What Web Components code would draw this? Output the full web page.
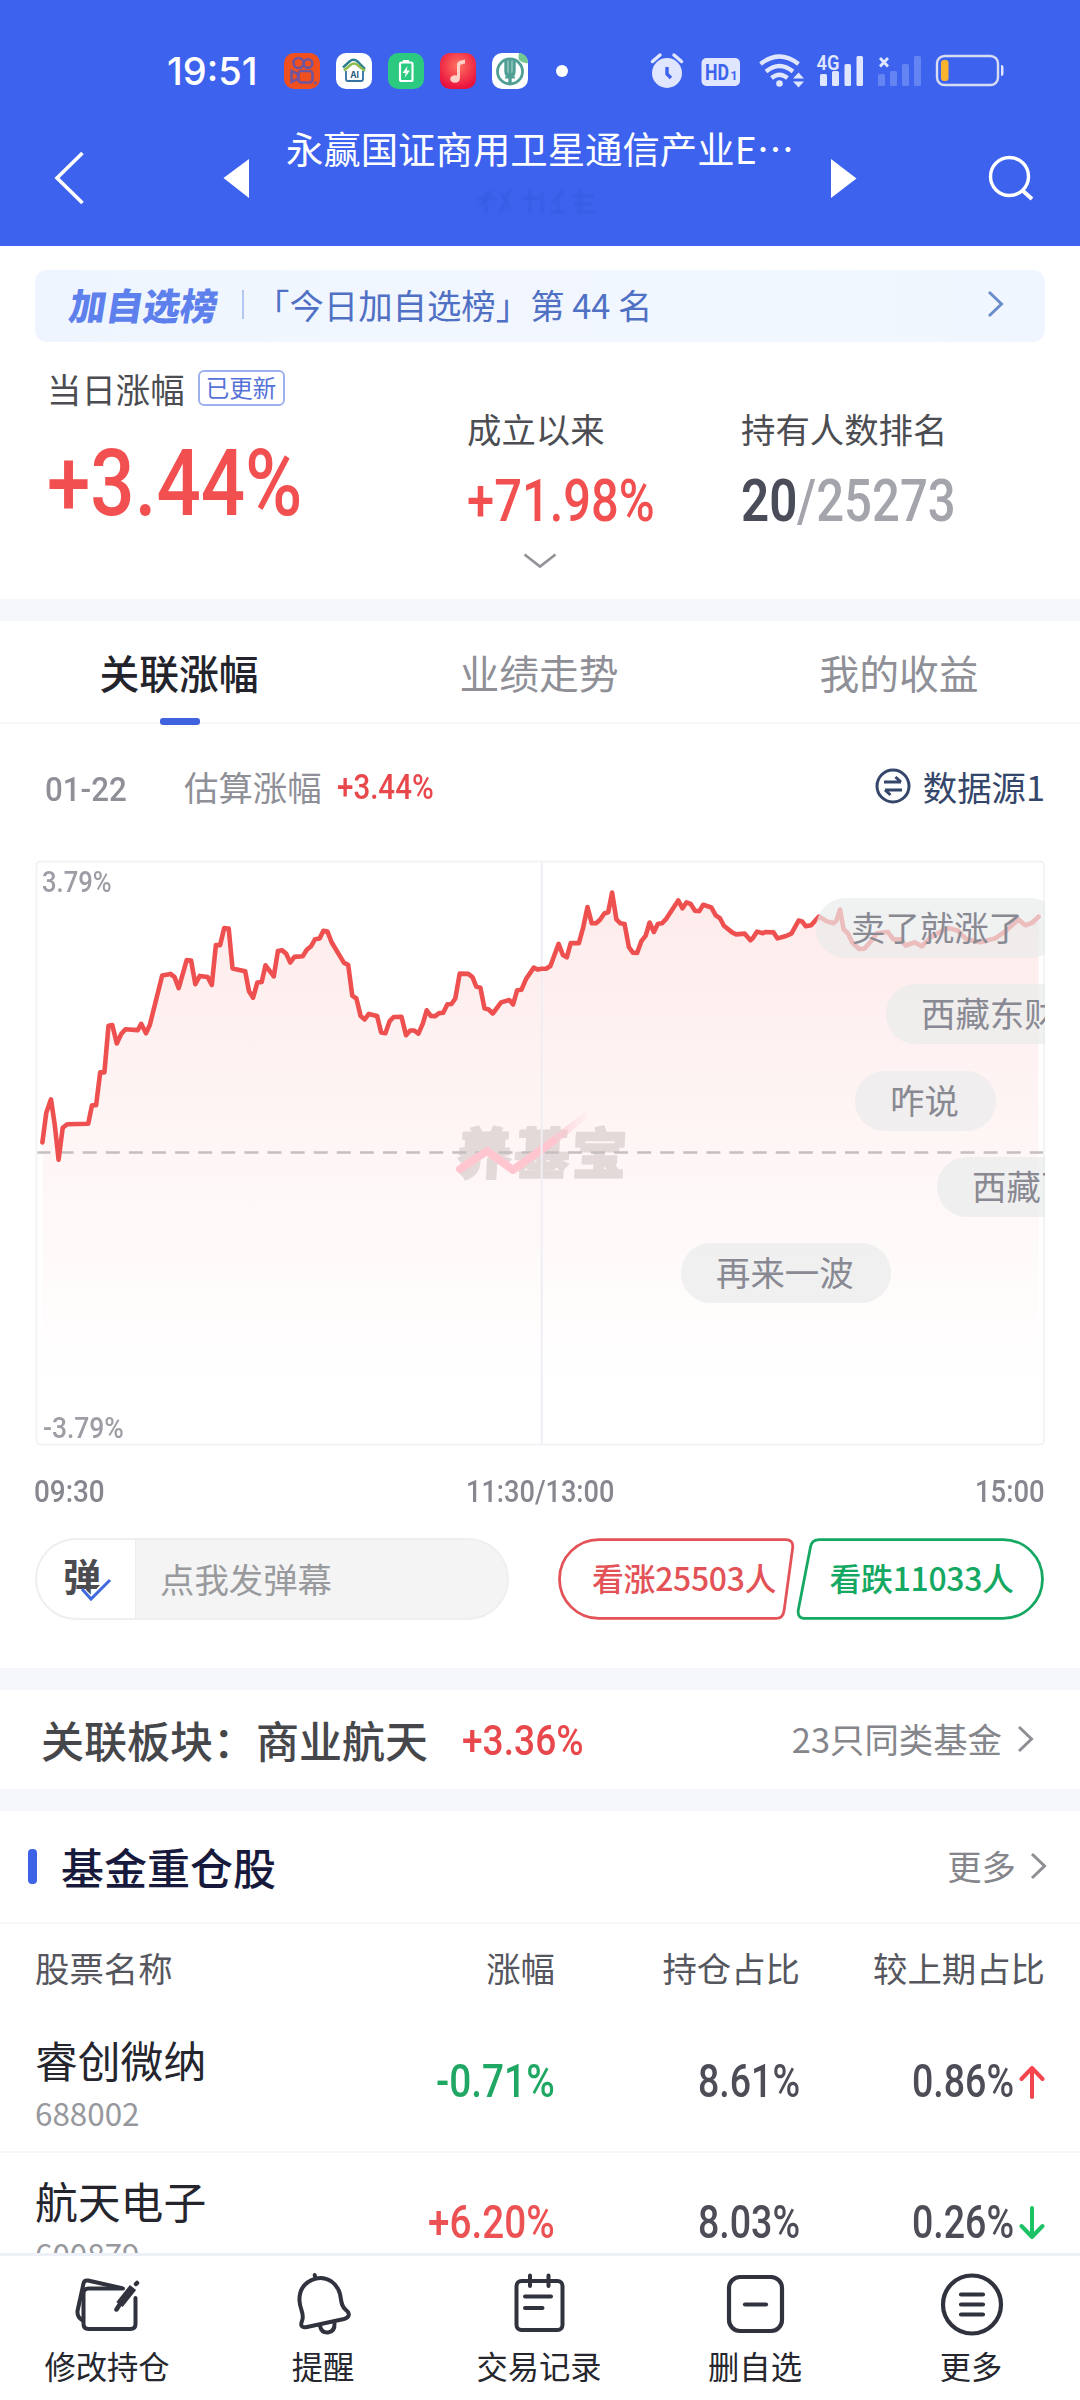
<!DOCTYPE html>
<html lang="zh-CN">
<head>
<meta charset="utf-8">
<title>基金详情</title>
<style>
html,body{margin:0;padding:0;background:#fff}
body{width:1080px;height:2400px;overflow:hidden;font-family:"Noto Sans CJK SC","Noto Sans",sans-serif;color:#4c4d55}
</style>
</head>
<body>
<fund-page></fund-page>
<script>
const define=(name,html,extra)=>customElements.define(name,class extends HTMLElement{
  connectedCallback(){
    if(this.shadowRoot)return;
    const root=this.attachShadow({mode:'open'});
    root.innerHTML=typeof html==='function'?html(this):html;
    if(extra)extra(this,root);
  }
});

/* Narrow numerals: set in one family and fitted to a given advance width. */
define('din-text',el=>`<style>
:host{display:inline-block;white-space:nowrap;flex:none;width:${el.getAttribute('w')}px;height:${el.getAttribute('s')}px;line-height:${el.getAttribute('s')}px;
font-family:Roboto,sans-serif;font-weight:${el.getAttribute('wt')||500};font-size:${el.getAttribute('s')}px}
span{display:inline-block;transform-origin:0 50%}
</style><span><slot></slot></span>`,(el,root)=>{
  const s=root.querySelector('span');
  s.style.transform=`scaleX(${el.getAttribute('w')/s.offsetWidth})`;
});

define('chevron-icon',el=>`<style>:host{display:block;flex:none}svg{display:block}</style>
<svg width="20" height="30" viewBox="0 0 20 30" fill="none" stroke="${el.getAttribute('color')}" stroke-width="${el.getAttribute('sw')||3}"><path d="M3 3 15.500 15 3 27"/></svg>`);

define('section-gap',`<style>:host{display:block;height:22px;background:#f5f7fa}</style>`);

define('status-bar',`<style>
:host{display:flex;align-items:center;height:106px;padding:36px 0 0 167px;box-sizing:border-box;color:#fff}
.apps{display:flex;gap:16px;margin-left:26px}
svg{display:block;flex:none}
.dot{width:12px;height:12px;border-radius:50%;background:#fff;margin-left:28px}
.sys{margin-left:82px}
</style>
<din-text w="91" s="38" wt="500" style="font-family:Inter">19:51</din-text>
<div class="apps">
<svg width="36" height="36"><rect width="36" height="36" rx="10" fill="#f0501f"/><g fill="none" stroke="#70549c" stroke-width="2.600"><circle cx="14.500" cy="10" r="5"/><circle cx="24" cy="10.500" r="4.300"/><rect x="14.500" y="18" width="14" height="11.500" rx="3"/><path d="M14 21 7.500 18v11l6.500-3z"/></g><circle cx="31.500" cy="30" r="1.500" fill="#70549c"/></svg>
<svg width="36" height="36"><rect width="36" height="36" rx="10" fill="#fff"/><g fill="none" stroke-width="2.400"><path d="M7 14.500 13.500 8.500q4-3.500 8 0L29 16" stroke="#2e7f8f"/><path d="M8 17.500 14.500 12q3.500-3 7 0L29 18" stroke="#8dbb4c"/><path d="M10 18v8q0 2 2 2h13q2 0 2-2v-8" stroke="#3272a4" stroke-width="1.800"/></g><text x="18.500" y="25" font-family="Inter" font-size="8.500" font-weight="700" fill="#1f5a80" text-anchor="middle">AI</text></svg>
<svg width="36" height="36"><rect width="36" height="36" rx="10" fill="#2cca80"/><rect x="15" y="7" width="6" height="3" fill="#fff"/><rect x="12" y="9.500" width="12.500" height="18.500" rx="1.500" fill="none" stroke="#fff" stroke-width="2.200"/><path d="M19.500 13 14.500 20h3.200l-.8 4.500 5-7h-3.200z" fill="#fff"/></svg>
<svg width="36" height="36"><defs><radialGradient id="m" cx=".5" cy=".35" r=".65"><stop offset="0" stop-color="#ff7260"/><stop offset="1" stop-color="#e9113d"/></radialGradient></defs><rect width="36" height="36" rx="10" fill="url(#m)"/><g fill="#ffd0c8"><ellipse cx="15" cy="26" rx="4.800" ry="3.800"/><path d="M17 25V11q.5-3 4-3.500l4-1v4l-4 1q-1 .3-1 2v12z"/></g></svg>
<svg width="36" height="36"><rect width="36" height="36" rx="10" fill="#fff"/><path d="M27 0q9 1 9 10-5 1-9-3-1-3 0-7" fill="#74c990"/><circle cx="18" cy="18.500" r="12.500" fill="none" stroke="#4f9f94" stroke-width="2.800"/><path d="M18 6v26M14 8v10q0 5 4 5t4-5V8" fill="none" stroke="#4f9f94" stroke-width="3.400"/><path d="M13 24.500h10" stroke="#4f9f94" stroke-width="2"/></svg>
</div>
<div class="dot"></div>
<svg class="sys" width="360" height="40" viewBox="650 51 360 40" fill="#dfe6fd">
<circle cx="667" cy="73" r="15"/><path d="M652.500 61.500 660 55M674 55l7.500 6.500" stroke="#dfe6fd" stroke-width="3.500" stroke-linecap="round"/><path d="M667 67v7l4 4" fill="none" stroke="#3d63ee" stroke-width="3.400"/>
<rect x="701.500" y="58" width="38.500" height="28" rx="5"/><text x="705" y="80" font-family="Roboto" font-weight="700" font-size="22" textLength="24" lengthAdjust="spacingAndGlyphs" fill="#3d63ee">HD<tspan font-size="2"> </tspan></text><text x="730.500" y="80" font-family="Roboto" font-weight="700" font-size="13" textLength="7" lengthAdjust="spacingAndGlyphs" fill="#3d63ee">1</text>
<g fill="none" stroke="#dfe6fd" stroke-width="4.200"><path d="M760.500 64q19-15 38 0M766 71.500q13.500-11 27 0M771.500 78q8-6.500 16 0"/></g><circle cx="779.500" cy="83.500" r="3.300"/><path d="M793 78.500h11l-5.500-6zM793 81.500h11l-5.500 6z"/>
<text x="816.500" y="69.500" font-family="Roboto" font-weight="600" font-size="20.500" textLength="23" lengthAdjust="spacingAndGlyphs">4G</text>
<rect x="820" y="74" width="7" height="12" rx="1.500"/><rect x="832" y="71" width="7" height="15" rx="1.500"/><rect x="844.500" y="64" width="6.500" height="22" rx="1.500"/><rect x="856.500" y="56" width="6.500" height="30" rx="1.500"/>
<path d="M880 58l8 8.500M888 58l-8 8.500" stroke="#dfe6fd" stroke-width="2.800"/>
<g fill="#6484f3"><rect x="878" y="74" width="7" height="12" rx="1.500"/><rect x="890" y="71" width="7" height="15" rx="1.500"/><rect x="902" y="64" width="7" height="22" rx="1.500"/><rect x="914" y="56" width="7" height="30" rx="1.500"/></g>
<rect x="937" y="56" width="61" height="29" rx="7.500" fill="none" stroke="#d7dcf2" stroke-width="2.400"/><path d="M1001 65q2.500 0 2.500 2v7q0 2-2.500 2z"/><rect x="941" y="60" width="7.500" height="21" rx="3" fill="#f7b42c"/>
</svg>`);

define('nav-header',`<style>
:host{display:flex;align-items:flex-start;height:140px;box-sizing:border-box;color:#fff}
svg{display:block;flex:none}
.mid{width:582px;display:flex;flex-direction:column;align-items:center}
.t{height:44px;line-height:44px;margin-top:20px;font-size:37.400px;white-space:nowrap}
.s{margin-top:14px;filter:blur(1.200px)}
</style>
<svg width="249" height="140" viewBox="0 0 249 140" fill="none"><path d="M82.500 47 57 72l25.500 25" stroke="#fff" stroke-width="3.600"/><path d="M223.500 72 249 53v39z" fill="#fff"/></svg>
<div class="mid"><div class="t">永赢国证商用卫星通信产业E…</div>
<svg class="s" width="136" height="34" viewBox="0 0 136 34" fill="none" stroke="#3156dc" stroke-width="2.800" opacity=".5"><path d="M8 22 20 6M14 8v22M6 14h18M30 10l8 16M38 6 28 30M58 6v24M50 14h20M70 8v22M80 20 92 6M86 10v20M78 28h16M108 5v25M100 12h22M102 20h18M104 28h20"/></svg></div>
<svg width="249" height="140" viewBox="831 0 249 140" fill="none"><path d="M831 53v39l25.500-19.500z" fill="#fff"/><circle cx="1009.500" cy="70.500" r="19" stroke="#fff" stroke-width="3.400"/><path d="M1022.500 84.500 1032 93" stroke="#fff" stroke-width="4"/></svg>`);

define('rank-banner',`<style>
:host{display:flex;align-items:center;height:72px;box-sizing:border-box;padding-bottom:3px;margin:24px 35px 0;border-radius:12px;background:linear-gradient(90deg,#eff5fe,#f2f7ff 50%,#f0f6ff);color:#5070c4;white-space:nowrap}
.logo{display:block;width:152px;margin-left:35px;font-weight:900;font-size:37px;line-height:50px;color:#5e80ec;transform:skewX(-9deg)}
.bar{width:2px;height:29px;background:#b2c7f2;margin-left:20px}
.t{font-size:34.400px;line-height:50px;margin-left:11px;white-space:pre}
chevron-icon{margin-left:auto;margin-right:39px}
</style>
<span class="logo">加自选榜</span><div class="bar"></div><div class="t">「今日加自选榜」第 44 名</div><chevron-icon color="#6b8ccb"></chevron-icon>`);

define('summary-panel',`<style>
:host{display:grid;grid-template-columns:467px 274px 1fr;grid-template-rows:196px 61px;height:257px;color:#4c4d52;font-size:34.400px}
.a{padding:21px 0 0 47px;color:#f25050}
.r{display:flex;align-items:center;height:50px;line-height:50px;color:#4c4d52}
.tag{box-sizing:border-box;height:36px;width:87px;margin-left:13px;border:2px solid #9db2ec;border-radius:6px;font-size:23.500px;line-height:30px;text-align:center;color:#5672d8}
.big{margin-top:24px;display:block}
.b{padding-top:61px}
.b div{height:50px;line-height:50px}
.b p{display:flex;margin:18px 0 0}
.chev{grid-column:1/4;display:flex;justify-content:center;align-items:flex-start;padding-top:13px}
</style>
<div class="a"><div class="r">当日涨幅<span class="tag">已更新</span></div><din-text class="big" w="256" s="93">+3.44%</din-text></div>
<div class="b"><div>成立以来</div><p style="color:#f25050"><din-text w="188" s="59">+71.98%</din-text></p></div>
<div class="b"><div>持有人数排名</div><p><din-text w="56" s="59" wt="600" style="color:#4a4d59">20</din-text><din-text w="159" s="59" style="color:#a3a4ac">/25273</din-text></p></div>
<div class="chev"><svg width="36" height="20" fill="none" stroke="#93949a" stroke-width="2.800"><path d="M2.500 3.500 18 15.500 33.500 3.500"/></svg></div>`);

define('tab-bar',`<style>
:host{display:grid;grid-template-columns:repeat(3,360px);height:103px;border-bottom:2px solid #f5f6f8;box-sizing:border-box;font-size:39.800px;color:#8f9097}
div{display:flex;flex-direction:column;align-items:center;padding-top:24px;line-height:54px}
span{margin-left:-2px}
.on{color:#23242b;font-weight:500}
i{display:block;width:40px;height:7px;border-radius:3px;background:#3f63df;margin-top:19px}
</style><div class="on"><span>关联涨幅</span><i></i></div><div><span>业绩走势</span></div><div><span>我的收益</span></div>`);

define('chart-legend',`<style>
:host{display:flex;align-items:center;height:136px;box-sizing:border-box;padding:0 35px 12px 45px;font-size:34.400px;line-height:50px;color:#8f9097}
.l{margin-left:57px}.v{margin-left:15px;color:#e8484c;margin-top:4px}
.d{margin-top:7px}
.src{display:flex;align-items:center;gap:12px;margin-left:auto;color:#35466b}
svg{margin-top:1px}
</style><din-text class="d" w="82" s="34" wt="500">01-22</din-text><span class="l">估算涨幅</span><din-text class="v" w="97" s="35">+3.44%</din-text>
<span class="src"><svg width="36" height="36" fill="none" stroke="#35466b" stroke-width="3"><circle cx="18" cy="18" r="16"/><path d="M9 14h17M20.500 9l5.500 5M27 22H10M15.500 27 10 22"/></svg>数据源1</span>`);

const AM='65,764 76,690 90,655 101,720 112,808 124,727 137,718 198,717 209,670 221,670 233,587 245,587 257,469 268,467 281,514 294,490 306,478 342,480 352,464 366,488 377,467 413,342 437,338 449,346 461,374 484,303 497,304 509,364 522,343 545,346 557,366 569,265 581,265 593,222 606,223 617,324 654,331 665,382 677,398 689,360 702,358 713,316 737,344 749,280 761,278 773,287 785,309 797,295 821,293 833,277 845,268 857,250 870,248 881,229 893,231 905,258 941,310 953,315 965,393 977,400 989,444 1001,453 1013,439 1037,444 1049,486 1061,488 1073,458 1085,447 1108,446 1121,493 1133,481 1145,481 1157,489 1170,463 1181,430 1193,444 1205,445 1217,437 1229,436 1241,415 1253,414 1264,400 1277,337 1302,338 1314,346 1325,370 1337,373 1349,425 1361,428 1373,438 1397,410 1421,404 1432,415 1444,379 1456,378 1470,350 1492,322 1504,327 1515,325';
const PM='73,325 85,318 108,262 120,290 131,296 142,260 165,260 177,220 189,169 201,210 213,210 224,201 236,185 247,182 258,132 270,200 281,210 293,212 305,270 316,284 328,285 340,255 352,241 363,208 375,232 386,211 398,210 410,198 443,152 455,172 466,157 478,161 490,178 502,179 513,163 536,170 548,190 560,197 571,216 594,233 605,238 629,236 645,253 652,247 664,231 680,235 687,232 710,233 721,248 745,242 760,236 780,203 790,205 800,217 815,215 837,193 860,205 878,210 886,203 896,175 906,225 918,235 930,258 950,275 965,274 980,258 1000,235 1030,232 1045,250 1065,250 1080,266 1105,258 1125,268 1150,245 1175,232 1200,222 1225,228 1250,250 1290,258 1330,248 1360,230 1395,200 1415,215 1435,208 1452,193';
const plot=(s,x0,k)=>s.split(' ').map(p=>{const[x,y]=p.split(',').map(Number);return (x0+x/k-35).toFixed(1)+','+(y/2.529-19.7).toFixed(1)}).join(' ');
const LINE=plot(AM,20,2.904)+' '+plot(PM,520,2.8);

define('danmaku-pill',el=>`<style>:host{position:absolute;left:${el.getAttribute('x')}px;top:${el.getAttribute('y')}px;height:60px;line-height:57px;padding:0 37px 0 35px;border-radius:30px;background:rgba(234,235,235,.7);color:#888992;font-size:34.400px;white-space:nowrap}</style><slot></slot>`);

define('trend-chart',`<style>
:host{display:block;position:relative;margin:0 35px;height:586px;overflow:hidden}
svg{display:block}
.lab{position:absolute;left:7px;color:#9d9ea5}
</style>
<svg width="1010" height="586" viewBox="0 0 1010 586">
<defs><linearGradient id="f" gradientUnits="userSpaceOnUse" x1="0" y1="30" x2="0" y2="530"><stop offset="0" stop-color="#f65a5a" stop-opacity=".12"/><stop offset=".6" stop-color="#f65a5a" stop-opacity=".045"/><stop offset="1" stop-color="#f65a5a" stop-opacity="0"/></linearGradient>
<linearGradient id="w" gradientUnits="userSpaceOnUse" x1="505" y1="0" x2="556" y2="0"><stop offset="0" stop-color="#ffc3cd"/><stop offset="1" stop-color="#ffc3cd" stop-opacity="0"/></linearGradient></defs>
<polygon points="7.400,540 ${LINE} 1003.600,540" fill="url(#f)"/>
<g font-family="Noto Sans CJK SC" font-size="55" font-weight="900" fill="#e3d9d9" stroke="#e3d9d9" stroke-width="2" stroke-linejoin="round" transform="translate(0 314) skewX(-3)"><text x="421" y="0" textLength="170">养基宝</text></g>
<path d="M1.500 292.500H1008" stroke="#c5bfc0" stroke-width="2.400" stroke-dasharray="14 9.100"/>
<path d="M425 309 452 291 478 310 517 282" fill="none" stroke="#ffc6cf" stroke-width="8" stroke-linecap="round" stroke-linejoin="round"/>
<path d="M514 279 550 252 556 255 520 285z" fill="url(#w)"/>
<path d="M506.700 1V584" stroke="#f0edf4" stroke-width="2"/>
<rect x="1.500" y="1.500" width="1007.500" height="583" rx="4" fill="none" stroke="#f2f3f5" stroke-width="2"/>
<polyline points="${LINE}" fill="none" stroke="#ee5050" stroke-width="4.600" stroke-linejoin="round" stroke-linecap="round"/>
</svg>
<din-text class="lab" style="top:7.500px" w="70" s="30" wt="500">3.79%</din-text><din-text class="lab" style="top:553.500px;left:8px" w="81" s="30" wt="500">-3.79%</din-text>
<danmaku-pill x="781" y="38">卖了就涨了</danmaku-pill><danmaku-pill x="851" y="124">西藏东财</danmaku-pill><danmaku-pill x="820" y="211">咋说</danmaku-pill><danmaku-pill x="902" y="297">西藏百</danmaku-pill><danmaku-pill x="646" y="383.500">再来一波</danmaku-pill>`);

define('time-axis',`<style>:host{display:flex;justify-content:space-between;align-items:center;height:92px;padding:0 35px 0 34px;color:#86878f;box-sizing:border-box}</style>
<din-text w="71" s="31" wt="500">09:30</din-text><din-text w="148" s="31" wt="500">11:30/13:00</din-text><din-text w="70" s="31" wt="500">15:00</din-text>`);

define('vote-bar',`<style>
:host{display:flex;height:130px;padding:0 35px}
.in{display:flex;box-sizing:border-box;width:475px;height:82px;border:2px solid #efefef;border-radius:41px;overflow:hidden;background:#f4f4f5;font-size:34.400px;line-height:76px;color:#999a9d}
.ic{width:98px;background:#fff;border-right:1px solid #eee}
svg{display:block}
.in span{margin-left:24px}
.v{margin-left:49px}
</style>
<div class="in"><div class="ic"><svg width="98" height="78"><text x="26" y="51" font-family="Noto Sans CJK SC" font-weight="600" font-size="38" fill="#4b4b50">弹</text><path d="M46 51 54 59 70 42" fill="none" stroke="#fff" stroke-width="6"/><path d="M45 49 54 59 73 40" fill="none" stroke="#4069e0" stroke-width="3"/></svg></div><span>点我发弹幕</span></div>
<svg class="v" width="488" height="82" viewBox="558 0 488 82" fill="none" stroke-width="2.800" font-family="Noto Sans CJK SC" font-weight="500" font-size="32">
<path d="M599 1.500H786q8 0 7.200 8L784.500 73q-1 7.500-8 7.500H599a39.500 39.500 0 0 1 0-79z" stroke="#e35257"/>
<path d="M1004 1.500H820q-8 0-9 7.500L798.800 72q-1.200 8.500 7 8.500H1004a39.500 39.500 0 0 0 0-79z" stroke="#15a862"/>
<text x="592" y="53" textLength="185" fill="#e35257">看涨25503人</text><text x="830" y="53" textLength="185" fill="#15a862">看跌11033人</text></svg>`);

define('sector-row',`<style>
:host{display:flex;align-items:center;height:99px;box-sizing:border-box;padding:0 44px 0 41px;font-size:34.400px;color:#85868b;line-height:50px}
b{font-weight:500;font-size:43px;line-height:60px;color:#46474b;white-space:nowrap}
din-text{margin:3px 0 0 34px;color:#e8484c}
.m{margin-left:auto;margin-top:-2px}chevron-icon{margin-left:14px}
</style><b>关联板块：商业航天</b><din-text w="122" s="42">+3.36%</din-text><span class="m">23只同类基金</span><chevron-icon color="#8e8f94"></chevron-icon>`);

define('holdings-head',`<style>
:host{display:flex;align-items:center;height:113px;box-sizing:border-box;padding:0 31px 0 28px;border-bottom:2px solid #f5f6f8;font-size:34.400px;color:#85868b;line-height:50px}
i{width:9px;height:35px;border-radius:4px;background:#3f63e6}
b{font-weight:500;font-size:43px;line-height:60px;color:#171a3c;margin-left:24px}
.m{margin-left:auto;margin-top:-2px}chevron-icon{margin-left:13px}
</style><i></i><b>基金重仓股</b><span class="m">更多</span><chevron-icon color="#8e8f94"></chevron-icon>`);

define('holdings-cols',`<style>
:host{display:grid;grid-template-columns:300px 220px 245px 245px;height:88px;box-sizing:border-box;padding:0 35px 2px;align-items:center;font-size:34.400px;color:#55565e;line-height:50px}
.e{text-align:right}</style><span>股票名称</span><span class="e">涨幅</span><span class="e">持仓占比</span><span class="e">较上期占比</span>`);

define('stock-row',el=>{const a=n=>el.getAttribute(n),up=a('dir')==='up';return `<style>
:host{display:grid;grid-template-columns:300px 220px 245px 245px;height:141px;box-sizing:border-box;padding:0 35px;border-bottom:2px solid #f5f6f8;color:#4c4d57}
.n{font-size:42.800px;line-height:60px;color:#24252d;padding-top:17px}
.c{font-size:31.400px;line-height:40px;color:#97989d;margin-top:4px}
.v{display:flex;justify-content:flex-end;padding-top:46px}
svg{display:block;margin:7px 0 0 5px}
</style>
<div><div class="n">${a('name')}</div><div class="c">${a('code')}</div></div>
<div class="v"><din-text w="${a('cw')}" s="46" style="color:${a('chg')[0]==='-'?'#1fa763':'#ec5153'}">${a('chg')}</din-text></div>
<div class="v"><din-text w="102" s="46">${a('pct')}</din-text></div>
<div class="v"><din-text w="102" s="46">${a('diff')}</din-text><svg width="26" height="34" fill="none" stroke="${up?'#f4454f':'#1ec266'}" stroke-width="4" stroke-linecap="round" stroke-linejoin="round"><path d="${up?'M13 32V3M2.500 14 13 3 23.500 14':'M13 2v29M2.500 20 13 31 23.500 20'}"/></svg></div>`});

define('tool-item',`<style>:host{display:flex;flex-direction:column;align-items:center;width:216px;margin-left:-1px;margin-right:1px;font-size:31.300px;line-height:46px;color:#26272e}</style><slot name="icon"></slot><slot></slot>`);

define('tool-bar',`<style>
:host{display:flex;height:147px;box-sizing:border-box;border-top:3px solid #eef0f8;background:#fff}
svg{display:block;margin:10px 0 5px}
</style>
<tool-item><svg slot="icon" width="72" height="72" fill="none" stroke="#30323e" stroke-width="4" stroke-linecap="round" stroke-linejoin="round"><path d="M50 22 17 14.500q-4-.5-4.500 3L6.500 45q-.5 6 4.500 9"/><path d="M52 22.500H17.500q-5 0-5 5V58q0 5 5 5h42q5 0 5-5V32"/><path d="M62 21.500 48.500 38.500" stroke-width="8" stroke-linecap="butt"/><path d="M49 38 45.500 43.500M65 18l1-1" stroke-width="4.500"/></svg>修改持仓</tool-item>
<tool-item><svg slot="icon" width="72" height="72" fill="none" stroke="#30323e" stroke-width="4" stroke-linecap="round" stroke-linejoin="round"><path d="M29 12.500C17 16 12 24 12.500 35c.5 9 5.500 13 2.500 20-2 5 0 7 5 6L57 53c6-1.500 6-6 2-9-5-3.500-4.500-9-6-16C50 17 40 10 29 12.500zM28.500 12l-.8-3"/><path d="M33 60q1.500 7 8 6.500 7-1 6.500-9"/></svg>提醒</tool-item>
<tool-item><svg slot="icon" width="72" height="72" fill="none" stroke="#30323e" stroke-width="4" stroke-linecap="round"><rect x="13.500" y="15" width="46" height="49" rx="5"/><path d="M27 9.500V20M45.500 9.500V20M22 30.500h26M22 42h17.500"/></svg>交易记录</tool-item>
<tool-item><svg slot="icon" width="72" height="72" fill="none" stroke="#30323e" stroke-width="4.200" stroke-linecap="round"><rect x="10" y="11" width="53" height="54" rx="11"/><path d="M26 38.500h21"/></svg>删自选</tool-item>
<tool-item><svg slot="icon" width="72" height="72" fill="none" stroke="#30323e" stroke-width="4.200" stroke-linecap="round"><circle cx="37" cy="38.500" r="29"/><path d="M26 28.500h22M26 38.500h22M26 48.500h22"/></svg>更多</tool-item>`);

define('fund-page',`<style>
:host{display:flex;flex-direction:column;width:1080px;height:2400px;background:#fff}
.top{background:#3d63ee;height:245.500px;flex:none}
.body{height:2007.500px;flex:none;overflow:hidden}
</style>
<div class="top"><status-bar></status-bar><nav-header></nav-header></div>
<div class="body">
<rank-banner></rank-banner><summary-panel></summary-panel><section-gap></section-gap>
<tab-bar></tab-bar><chart-legend></chart-legend><trend-chart></trend-chart><time-axis></time-axis><vote-bar></vote-bar>
<section-gap></section-gap><sector-row></sector-row><section-gap></section-gap>
<holdings-head></holdings-head><holdings-cols></holdings-cols>
<stock-row name="睿创微纳" code="688002" chg="-0.71%" cw="119" pct="8.61%" diff="0.86%" dir="up"></stock-row>
<stock-row name="航天电子" code="600879" chg="+6.20%" cw="127" pct="8.03%" diff="0.26%" dir="down"></stock-row>
</div>
<tool-bar></tool-bar>`);
</script>
</body>
</html>
